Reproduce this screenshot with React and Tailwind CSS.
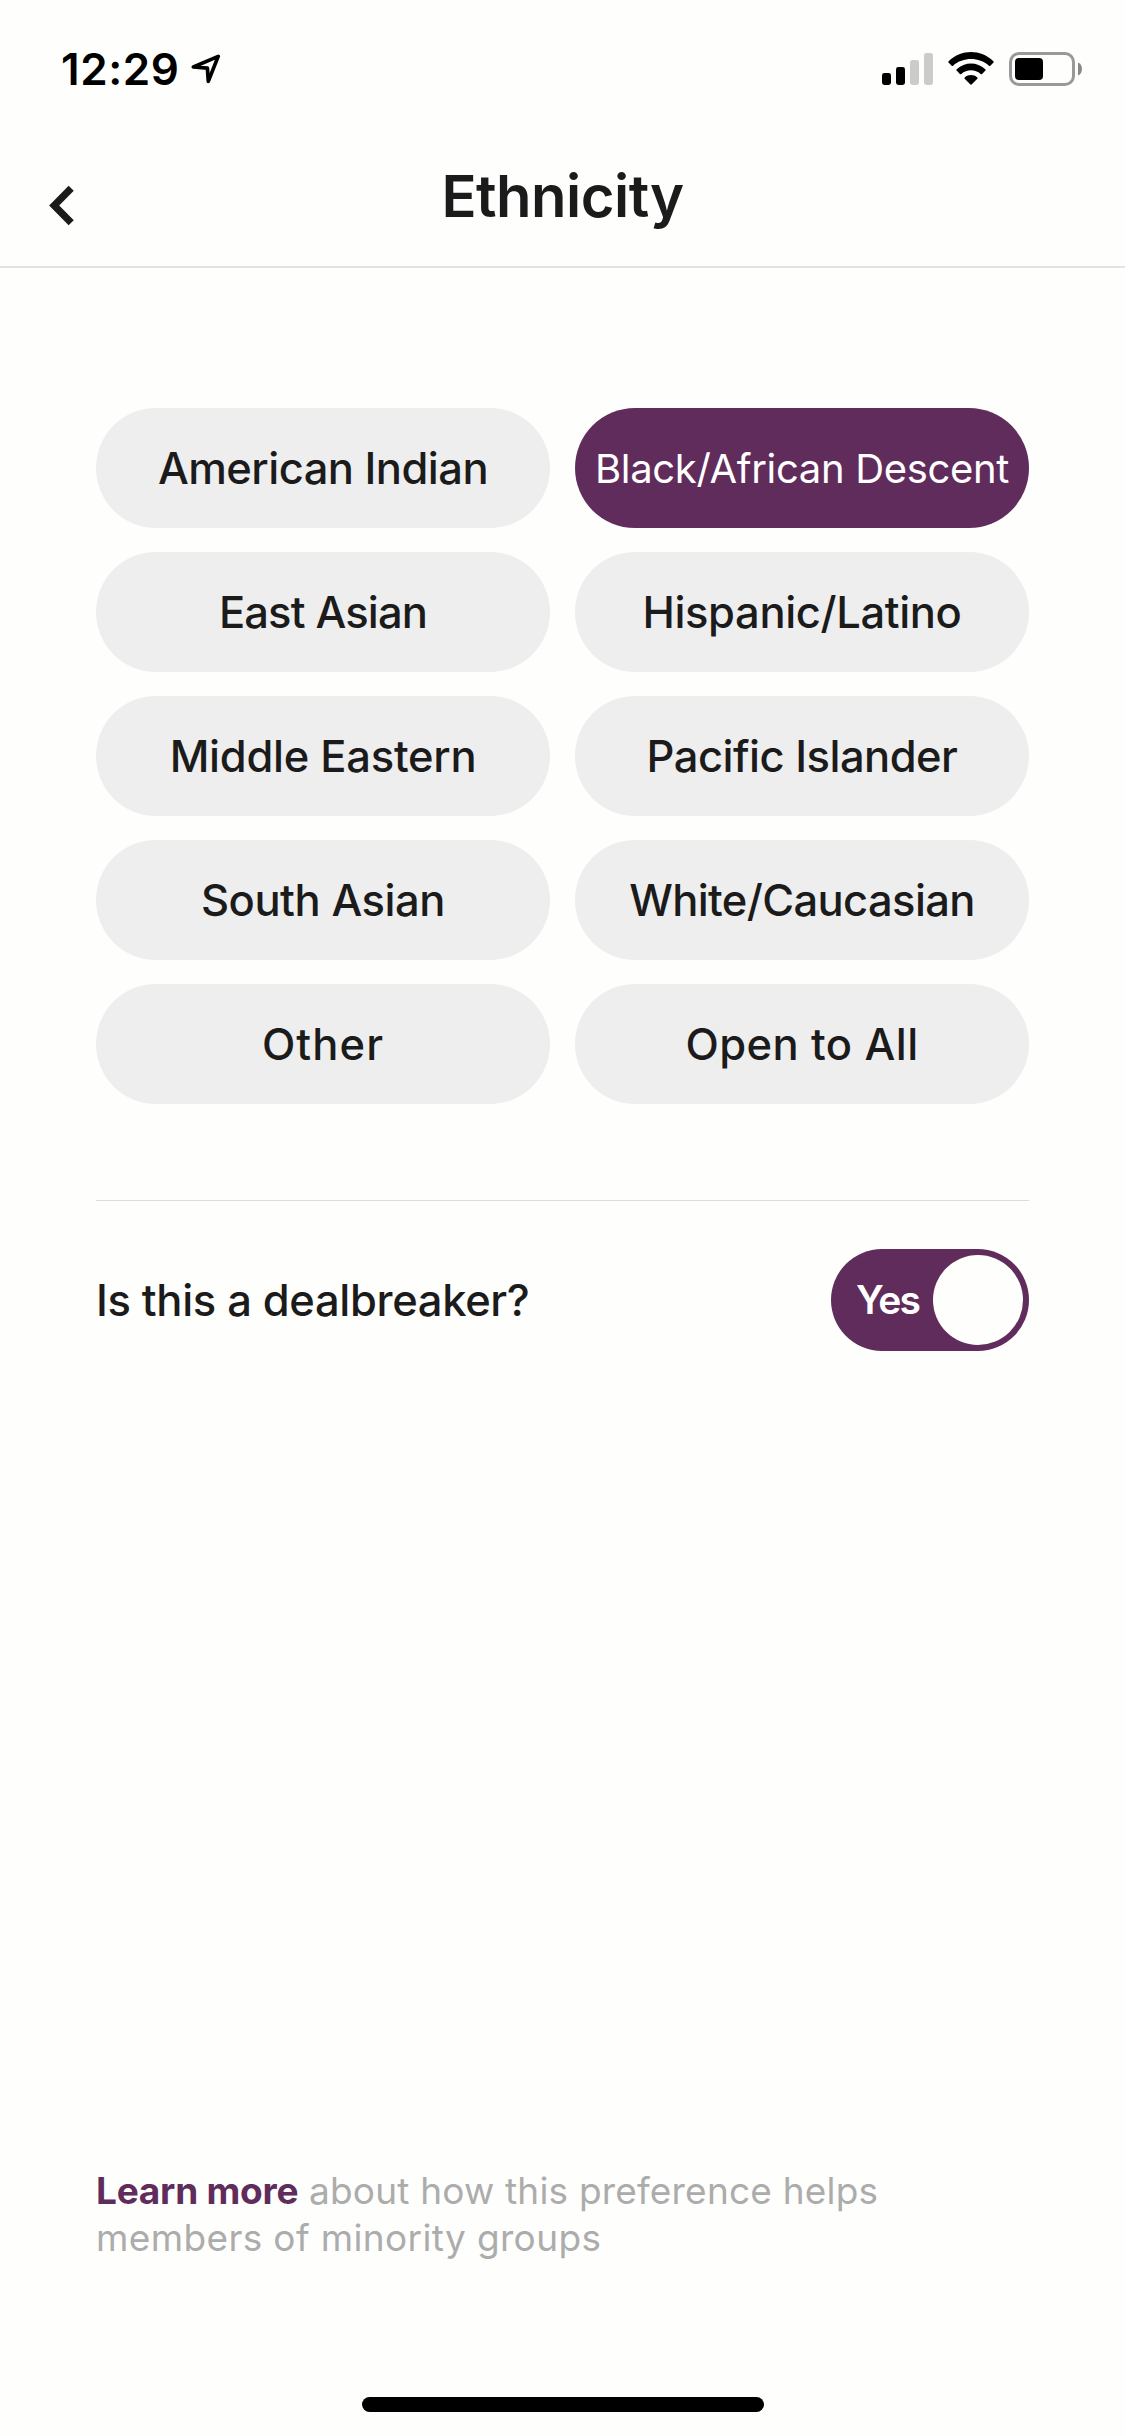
import React from "react";

const options = [
  { label: "American Indian", text: "text-[43.5px] tracking-[-0.53px] font-medium" },
  { label: "Black/African Descent", text: "text-[40px] tracking-[-0.34px]", selected: true },
  { label: "East Asian", text: "text-[43.5px] tracking-[-0.85px] font-medium" },
  { label: "Hispanic/Latino", text: "text-[43.5px] tracking-[-0.37px] font-medium" },
  { label: "Middle Eastern", text: "text-[43.5px] tracking-[-0.26px] font-medium" },
  { label: "Pacific Islander", text: "text-[43.5px] tracking-[-0.52px] font-medium" },
  { label: "South Asian", text: "text-[43.5px] tracking-[-0.45px] font-medium" },
  { label: "White/Caucasian", text: "text-[43.5px] tracking-[-0.62px] font-medium" },
  { label: "Other", text: "text-[43.5px] tracking-[1.08px] font-medium" },
  { label: "Open to All", text: "text-[43.5px] tracking-[0.42px] font-medium" },
];

function StatusBar() {
  return (
    <div className="flex h-[138px] items-center justify-between pl-[61px] pr-[43px] text-black">
      <div className="flex items-center gap-[11px]">
        <span className="text-[44px] font-semibold leading-none tracking-[0.6px]">12:29</span>
        <svg width="30" height="30" viewBox="0 0 30 30" fill="none" stroke="currentColor" strokeWidth="3.7" strokeLinejoin="round">
          <path d="M27.2 2.4 2.4 13l14 1.1.9 13.3Z" />
        </svg>
      </div>
      <div className="flex items-center">
        <svg width="51" height="34" viewBox="0 0 51 34">
          <rect x="0" y="21" width="9" height="12" rx="2.4" />
          <rect x="14" y="15" width="9" height="18" rx="2.4" />
          <rect x="28" y="8" width="9" height="25" rx="2.4" fill="#cbcbca" />
          <rect x="42" y="1" width="9" height="32" rx="2.4" fill="#cbcbca" />
        </svg>
        <svg className="ml-[15px]" width="46" height="34" viewBox="0 0 46 34">
          <path d="M.6 9.2C13.5-3 32.5-3 45.4 9.2c.5.5.5.9.1 1.3l-3.2 3.2c-.5.5-.9.5-1.4 0C31 4.800 15 4.800 5.100 13.700c-.5.5-.9.5-1.400 0L.5 10.500c-.4-.4-.4-.8.1-1.300Z" />
          <path d="M8.700 17.300c8.300-7.700 20.300-7.700 28.600 0 .5.5.5.9.1 1.300l-3.300 3.300c-.5.5-.9.5-1.400 0-5.600-5-13.800-5-19.400 0-.5.5-.9.5-1.400 0l-3.300-3.300c-.4-.4-.4-.8.1-1.300Z" />
          <path d="M16.700 25.400c3.700-3.200 8.900-3.200 12.600 0 .5.5.5.9 0 1.400l-5.500 5.500c-.5.5-1.100.5-1.600 0l-5.500-5.500c-.5-.5-.5-.9 0-1.400Z" />
        </svg>
        <svg className="ml-[15px]" width="73" height="34" viewBox="0 0 73 34">
          <rect x="1.5" y="1.5" width="63" height="31" rx="8.5" fill="none" stroke="#999998" strokeWidth="3" />
          <rect x="6" y="6" width="28" height="22" rx="4" />
          <path d="M69 10.500c5.300 2 5.300 11 0 13Z" fill="#888887" />
        </svg>
      </div>
    </div>
  );
}

function Header() {
  return (
    <header className="grid h-[130px] grid-cols-[1fr_auto_1fr] items-start border-b-2 border-[#e3e3e3]">
      <button aria-label="Back" className="ml-[48px] mt-[47px] w-[27px]">
        <svg width="27" height="41" viewBox="0 0 27 41" fill="none" stroke="#1b1b1b" strokeWidth="7.2">
          <path d="M23.200 3.200 6.200 20.500l17 17.300" />
        </svg>
      </button>
      <h1 className="mt-[29px] text-[58px] font-semibold leading-none tracking-[-0.5px]">Ethnicity</h1>
    </header>
  );
}

export default function App() {
  return (
    <div className="flex h-[2436px] w-[1125px] flex-col overflow-hidden bg-[#fefefd] font-['Inter',sans-serif] text-[#1b1b1b]">
      <StatusBar />
      <Header />
      <main className="flex flex-1 flex-col px-[96px] pt-[140px]">
        <div className="grid grid-cols-2 gap-x-[25px] gap-y-6">
          {options.map((o) => (
            <button
              key={o.label}
              className={`h-[120px] whitespace-nowrap rounded-[60px] pt-[2px] leading-none ${o.text} ${
                o.selected ? "bg-[#602c5b] text-white" : "bg-[#eeeeee]"
              }`}
            >
              {o.label}
            </button>
          ))}
        </div>
        <div className="mt-[96px] flex items-center justify-between border-t border-[#dcdcdb] pt-[48px]">
          <span className="pt-[2px] text-[43.5px] font-medium leading-none tracking-[-0.34px]">Is this a dealbreaker?</span>
          <button role="switch" aria-checked="true" className="flex h-[102px] w-[198px] items-center justify-between rounded-full bg-[#602c5b] pl-[25px] pr-[6px]">
            <span className="pb-[2px] text-[39px] font-semibold leading-none tracking-[-1.75px] text-white">Yes</span>
            <span className="size-[90px] rounded-full bg-[#fefefd]" />
          </button>
        </div>
        <p className="mt-auto text-[37px] leading-[47px] text-[#acacac]">
          <span className="font-bold tracking-[-0.23px] text-[#602c5b]">Learn more</span>
          <span className="tracking-[0.2px]"> about how this preference helps</span>
          <br />
          <span className="tracking-[0.36px]">members of minority groups</span>
        </p>
      </main>
      <div className="mx-auto mb-[24px] mt-[136px] h-[15px] w-[402px] shrink-0 rounded-full bg-black" />
    </div>
  );
}
